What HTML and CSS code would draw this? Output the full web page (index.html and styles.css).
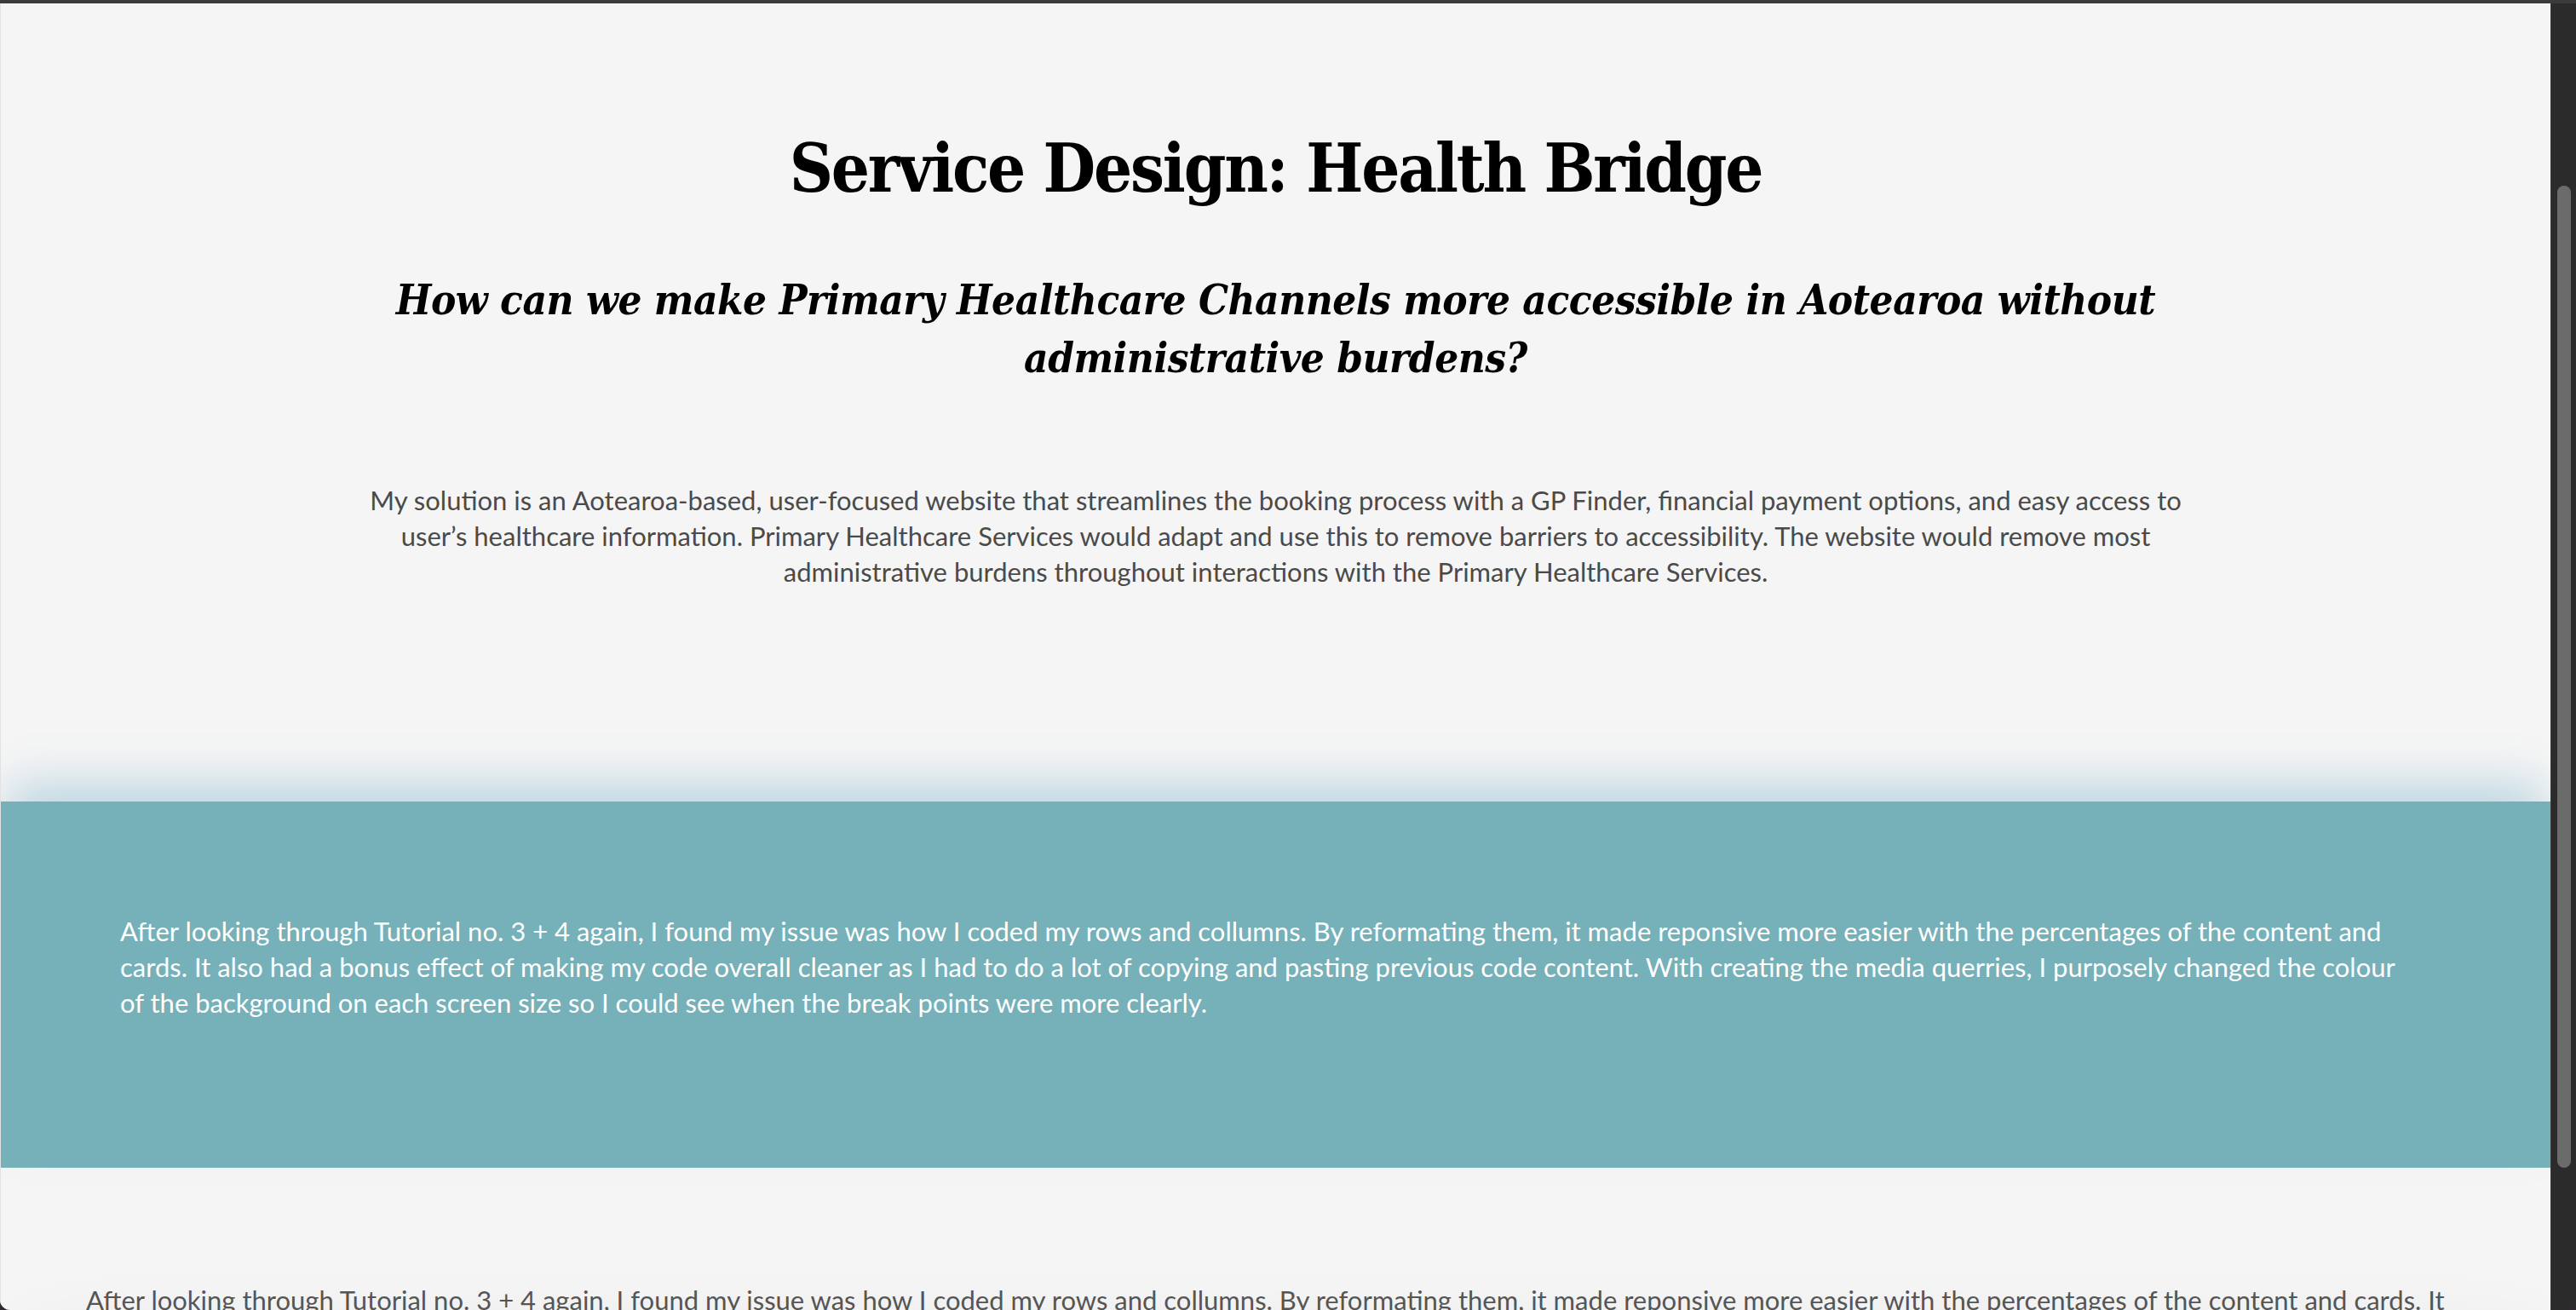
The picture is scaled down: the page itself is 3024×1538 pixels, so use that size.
FILE: index.html
```html
<!DOCTYPE html>
<html lang="en">
<head>
<meta charset="utf-8">
<title>Service Design: Health Bridge</title>
<link rel="stylesheet" href="styles.css">
</head>
<body>
<div class="window">
  <main class="viewport">
    <header class="intro">
      <h1 class="title">Service Design: Health Bridge</h1>
      <h2 class="question">How can we make Primary Healthcare Channels more accessible in Aotearoa without administrative burdens?</h2>
      <p class="summary">My solution is an Aotearoa-based, user-focused website that streamlines the booking process with a GP Finder, financial payment options, and easy access to user’s healthcare information. Primary Healthcare Services would adapt and use this to remove barriers to accessibility. The website would remove most administrative burdens throughout interactions with the Primary Healthcare Services.</p>
    </header>
    <section class="band">
      <p class="band-text">After looking through Tutorial no. 3 + 4 again, I found my issue was how I coded my rows and collumns. By reformating them, it made reponsive more easier with the percentages of the content and cards. It also had a bonus effect of making my code overall cleaner as I had to do a lot of copying and pasting previous code content. With creating the media querries, I purposely changed the colour of the background on each screen size so I could see when the break points were more clearly.</p>
    </section>
    <section class="notes">
      <p class="notes-text">After looking through Tutorial no. 3 + 4 again, I found my issue was how I coded my rows and collumns. By reformating them, it made reponsive more easier with the percentages of the content and cards. It also had a bonus effect of making my code overall cleaner as I had to do a lot of copying and pasting previous code content. With creating the media querries, I purposely changed the colour of the background on each screen size so I could see when the break points were more clearly.</p>
      <div class="card"></div>
    </section>
  </main>
  <div class="scrollbar"><div class="thumb"></div></div>
</div>
</body>
</html>
```
FILE: styles.css
```css
html, body {
  margin: 0;
  padding: 0;
  background: #2e2a2f;
}

.window {
  height: 1534px;
  border-top: 4px solid #3b3b3b;
  border-radius: 0 0 12px 12px;
  overflow: hidden;
  display: flex;
}

.viewport {
  flex: 1;
  background: #f5f5f5;
  overflow: hidden;
  border-left: 1px solid #e2e2e2;
}

.intro {
  text-align: center;
  padding-top: 146px;
}

.title {
  margin: 0;
  font-family: "DejaVu Serif Condensed", "DejaVu Serif", serif;
  font-stretch: condensed;
  font-weight: bold;
  font-size: 79px;
  line-height: 96px;
  letter-spacing: -2.2px;
  color: #000;
}

.question {
  margin: 72px auto 0;
  max-width: 2200px;
  font-family: "DejaVu Serif Condensed", "DejaVu Serif", serif;
  font-stretch: condensed;
  font-style: italic;
  font-weight: bold;
  font-size: 49px;
  line-height: 68px;
  letter-spacing: -0.5px;
  color: #000;
}

.summary,
.band-text,
.notes-text {
  font-family: Lato, "Open Sans", sans-serif;
  font-size: 31px;
  line-height: 42px;
}

.summary {
  margin: 112px auto 0;
  max-width: 2176px;
  color: #4a4a4a;
}

.band {
  margin-top: 249px;
  height: 430px;
  box-sizing: border-box;
  padding: 131px 140px 0 140px;
  background: #76b0b8;
  box-shadow: 0 -30px 50px -10px rgba(110, 170, 198, 0.42);
  position: relative;
}

.band-text {
  margin: 0;
  max-width: 2686px;
  color: #fff;
}

.notes {
  padding: 134px 80px 0 100px;
}

.notes-text {
  margin: 0;
  color: #555;
  position: relative;
  z-index: 1;
}

.card {
  margin: -8px -60px 0 -60px;
  height: 400px;
  background: #f5f5f5;
  box-shadow: 0 0 120px rgba(0, 0, 0, 0.19);
}

.scrollbar {
  width: 30px;
  flex: none;
  background: #2b2b2b;
  border-left: 1px solid #3a3a3a;
  box-sizing: border-box;
  padding: 214px 0 0 7px;
}

.thumb {
  width: 16px;
  height: 1153px;
  border-radius: 8px;
  background: #6b6b6b;
}
```
